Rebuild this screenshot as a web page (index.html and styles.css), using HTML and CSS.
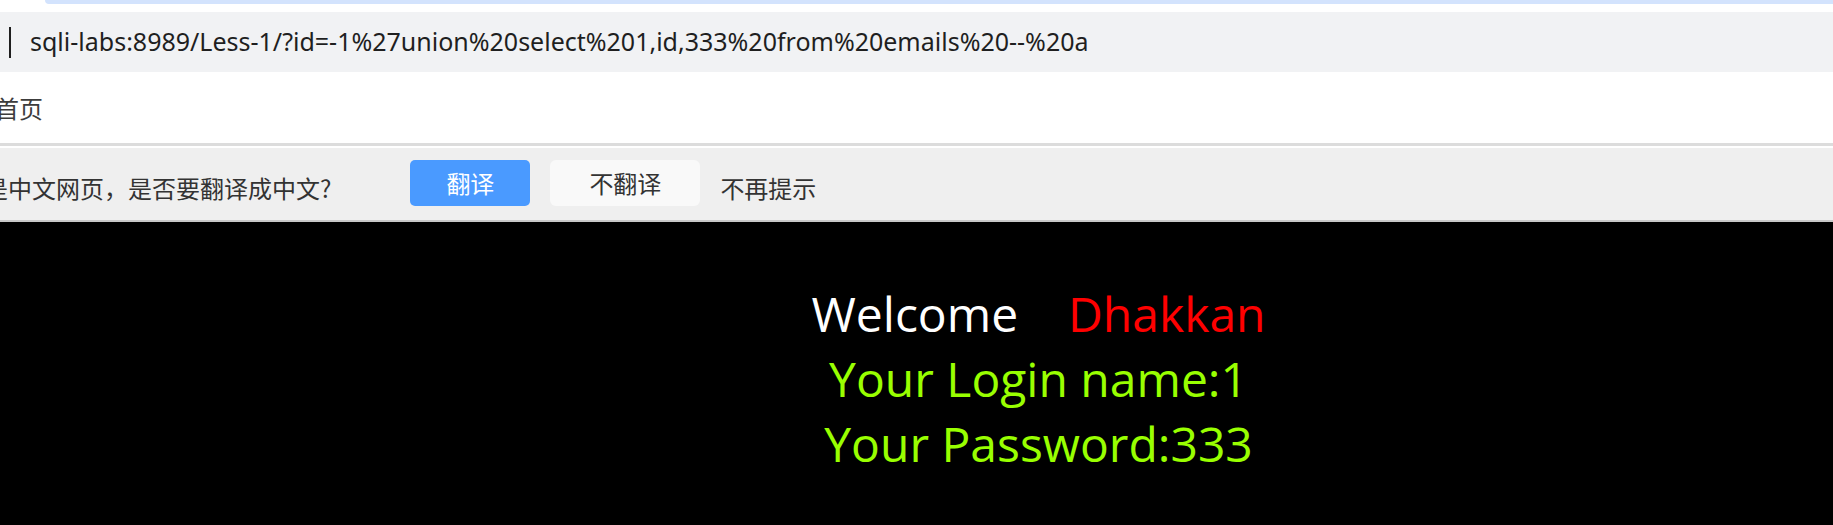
FILE: index.html
```html
<!DOCTYPE html>
<html lang="zh">
<head>
<meta charset="utf-8">
<title>sqli-labs Less-1</title>
<link rel="stylesheet" href="styles.css">
</head>
<body>
<div class="chrome">
  <div class="tabstrip"><div class="tabband"></div></div>
  <div class="urlbar">
    <span class="caret"></span>
    <span class="url">sqli-labs:8989/Less-1/?id=-1%27union%20select%201,id,333%20from%20emails%20--%20a</span>
  </div>
  <div class="bookmarks"><span class="bm">首页</span></div>
  <div class="translate">
    <span class="prompt">是中文网页，是否要翻译成中文?</span>
    <button class="btn btn-primary">翻译</button>
    <button class="btn btn-plain">不翻译</button>
    <span class="never">不再提示</span>
  </div>
</div>
<div class="page">
  <div class="content">
    <div class="welcome">Welcome&nbsp;&nbsp;&nbsp;<span class="name"> Dhakkan </span></div>
    <div class="result">Your Login name:1<br>Your Password:333</div>
  </div>
</div>
</body>
</html>
```

FILE: styles.css
```css
html, body {
  margin: 0;
  padding: 0;
  background: #000;
  overflow: hidden;
}
body {
  width: 1833px;
  height: 525px;
  font-family: "Noto Sans", "Noto Sans CJK SC", sans-serif;
}
.chrome {
  background: #fff;
  overflow: hidden;
}
.tabstrip {
  height: 12px;
  background: #fff;
}
.tabband {
  margin-left: 45px;
  height: 4px;
  background: #d3e3fd;
  border-bottom-left-radius: 4px;
}
.urlbar {
  height: 60px;
  background: #f1f2f4;
  display: flex;
  align-items: center;
  white-space: nowrap;
}
.caret {
  width: 2px;
  height: 31px;
  background: #1f1f1f;
  margin-left: 9px;
  margin-right: 19px;
}
.url {
  font-family: "Noto Sans", sans-serif;
  font-size: 25px;
  color: #1f1f1f;
  margin-top: -2px;
}
.bookmarks {
  height: 71px;
  display: flex;
  align-items: center;
  border-bottom: 3px solid #dcdcdc;
}
.bm {
  font-family: "Noto Sans CJK SC", sans-serif;
  font-size: 24px;
  color: #3c3c3c;
  margin-left: -5px;
  margin-top: -1px;
}
.translate {
  margin-top: 2px;
  height: 72px;
  background: #efefef;
  border-bottom: 2px solid #c8c8c8;
  display: flex;
  align-items: center;
  white-space: nowrap;
  font-family: "Noto Sans CJK SC", sans-serif;
  font-size: 24px;
  color: #333;
}
.prompt {
  margin-left: -16px;
  margin-top: 6px;
}
.btn {
  font-family: "Noto Sans CJK SC", sans-serif;
  font-size: 24px;
  height: 46px;
  border: none;
  padding: 0;
  margin-top: -2px;
  line-height: 46px;
}
.btn-primary {
  margin-left: 79px;
  width: 120px;
  background: #4a9aff;
  color: #fff;
  border-radius: 5px;
}
.btn-plain {
  margin-left: 20px;
  width: 150px;
  background: #f9f9f9;
  color: #333;
  border-radius: 6px;
}
.never {
  margin-left: 20px;
  margin-top: 6px;
}
.page {
  background: #000;
  height: 303px;
}
.content {
  padding-left: 244px;
  padding-top: 59px;
  text-align: center;
  font-family: "Open Sans", sans-serif;
  font-size: 48px;
  line-height: 65px;
}
.welcome {
  color: #fff;
}
.name {
  color: #f00;
}
.result {
  color: #99ff00;
}
```
